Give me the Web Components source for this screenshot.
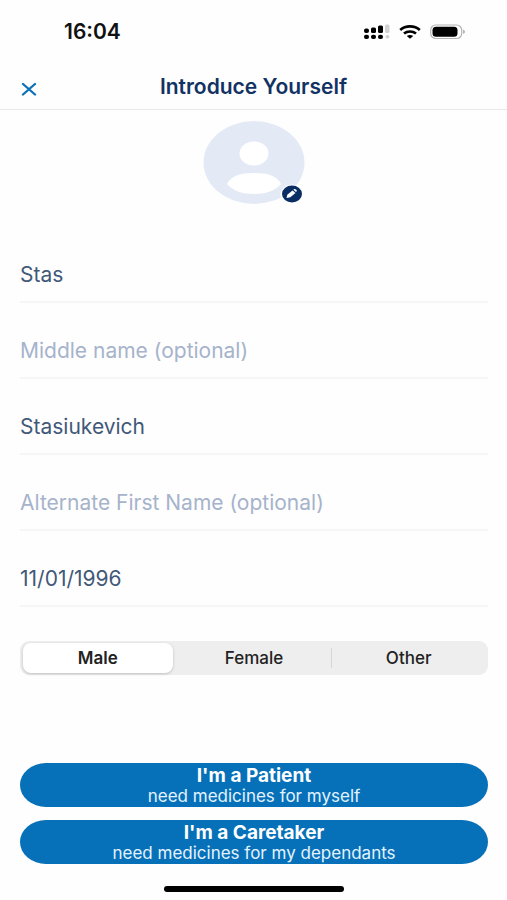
<!DOCTYPE html>
<html lang="en">
<head>
<meta charset="utf-8">
<meta name="viewport" content="width=device-width, initial-scale=1">
<title>Introduce Yourself</title>
<style>
  body { margin: 0; background: #fefefe; font-family: Inter, "Liberation Sans", sans-serif; }
</style>
</head>
<body>
<intro-page></intro-page>
<script>
const define = (name, html, setup) => {
  const template = document.createElement('template');
  template.innerHTML = html;
  customElements.define(name, class extends HTMLElement {
    constructor() {
      super();
      this.attachShadow({ mode: 'open' }).append(template.content.cloneNode(true));
    }
    connectedCallback() { if (setup) setup(this, this.shadowRoot); }
  });
};

define('status-bar', `
<style>
  :host { display: flex; align-items: center; justify-content: space-between; height: 64px; padding: 0 41px 0 64px; box-sizing: border-box; color: #111; }
  time { font-size: 21px; line-height: 24px; font-weight: 600; }
  .icons { display: flex; align-items: center; gap: 9px; }
  svg { display: block; }
</style>
<time>16:04</time>
<div class="icons">
  <svg width="26" height="16" viewBox="0 0 26 16" role="img" aria-label="Signal">
    <g fill="#000">
      <rect x="0" y="4.500" width="5" height="4.500" rx="2"/><rect x="7" y="3.500" width="5" height="5.500" rx="1.500"/><rect x="14" y="1.500" width="5" height="7.500" rx="1.500"/>
      <rect x="0" y="10.700" width="5" height="4.300" rx="2"/><rect x="7" y="10.700" width="5" height="4.300" rx="2"/><rect x="14" y="10.700" width="5" height="4.300" rx="2"/>
    </g>
    <rect x="21" y="0.500" width="4.500" height="8.500" rx="1.500" fill="#d2d2d2"/><rect x="21.500" y="11" width="4" height="3.500" rx="1.700" fill="#d2d2d2"/>
  </svg>
  <svg width="22" height="14" viewBox="0 0 22 14" role="img" aria-label="Wi-Fi">
    <g fill="none" stroke="#000" stroke-width="2.600">
      <path d="M1.200 5C6.500.200 15.500.200 20.800 5"/><path d="M5 8.600c3.400-2.900 8.600-2.900 12 0"/>
    </g>
    <path d="M7.800 11.100c1.800-1.500 4.600-1.500 6.400 0L11 13.800z"/>
  </svg>
  <svg width="36" height="16" viewBox="0 0 36 16" role="img" aria-label="Battery">
    <rect x="0.700" y="1" width="31" height="13.500" rx="5" fill="none" stroke="#b4b4b4" stroke-width="1.200"/>
    <rect x="2.500" y="2.700" width="25" height="10.100" rx="3.500"/>
    <path d="M33.200 5.500c2.200.8 2.200 3.700 0 4.500z" fill="#aaa"/>
  </svg>
</div>`);

define('nav-header', `
<style>
  :host { display: grid; grid-template-columns: 58px 1fr 58px; align-items: center; height: 46px; box-sizing: border-box; border-bottom: 1px solid #e9e9e9; }
  button { justify-self: center; display: grid; place-items: center; width: 32px; height: 32px; padding: 4px 0 0; border: 0; background: none; }
  h1 { margin: 0; text-align: center; font-size: 21px; line-height: 24px; font-weight: 600; color: #123263; white-space: nowrap; }
</style>
<button type="button" aria-label="Close">
  <svg width="16" height="14" viewBox="0 0 16 14"><path d="M2 2l12 10.500M14 2L2 12.500" fill="none" stroke="#0a70b8" stroke-width="2.300" stroke-linecap="round"/></svg>
</button>
<h1><slot></slot></h1>`);

define('profile-avatar', `
<style>
  :host { display: grid; justify-content: center; padding: 11px 0 16px; }
  div { position: relative; }
  svg { display: block; }
  button { position: absolute; right: 1px; bottom: 0; width: 23px; height: 19px; padding: 0; border: 0; background: none; }
</style>
<div>
  <svg width="102" height="83" viewBox="0 0 102 83" role="img" aria-label="Profile picture">
    <ellipse cx="51" cy="41.500" rx="50.500" ry="41.500" fill="#e4eaf5"/>
    <ellipse cx="51" cy="32.500" rx="14.500" ry="12" fill="#fff"/>
    <path d="M24 63C28 55 37 52 51 52S74 55 78 63C72 70 62 73 51 73S30 70 24 63z" fill="#fff"/>
    <ellipse cx="89" cy="73.500" rx="11.500" ry="10" fill="#fefefe"/>
  </svg>
  <button type="button" aria-label="Edit picture">
    <svg width="23" height="19" viewBox="0 0 23 19" overflow="visible">
      <ellipse cx="11" cy="9" rx="10" ry="8.400" fill="#0a2e63"/>
      <path d="M5.500 13l.8-3.200 5.200-4.300 3 2.500-5.200 4.200z" fill="#fff"/>
      <path d="M12.400 4.800l.9-.7c.8-.5 3.100 1.400 2.400 2.100l-.7.900z" fill="#fff"/>
    </svg>
  </button>
</div>`);

define('text-field', `
<style>
  :host { display: block; padding-top: 32px; }
  input { display: block; width: 100%; height: 44px; box-sizing: border-box; margin: 0; padding: 0 0 12px; border: 0; border-bottom: 2px solid #f5f6f7; border-radius: 0; outline: 0; background: none; font: 400 21px/24px Inter, "Liberation Sans", sans-serif; color: #425878; }
  input::placeholder { color: #a6b3cb; opacity: 1; }
</style>
<input type="text">`, (host, root) => {
  const input = root.querySelector('input');
  input.setAttribute('aria-label', host.getAttribute('label'));
  input.placeholder = host.getAttribute('placeholder') || '';
  input.value = host.getAttribute('value') || '';
});

define('gender-picker', `
<style>
  :host { display: block; }
  fieldset { display: grid; grid-template-columns: 1fr 1fr 1fr; min-width: 0; height: 34px; box-sizing: border-box; margin: 0; padding: 2px; border: 0; border-radius: 9px; background: #eee; }
  label { position: relative; display: grid; place-items: center; border-radius: 8px; font-size: 17px; line-height: 20px; font-weight: 500; color: #222; }
  input { position: absolute; inset: 0; width: 100%; height: 100%; margin: 0; appearance: none; }
  label:has(:checked) { margin: 0 4px 0 1px; background: #fff; font-weight: 600; box-shadow: 0 1px 3px #0003; }
  label:last-child::before { content: ""; position: absolute; left: 0; top: 5px; bottom: 5px; width: 1px; background: #d6d6d6; }
</style>
<fieldset aria-label="Gender">
  <label><input type="radio" name="gender" checked><span>Male</span></label>
  <label><input type="radio" name="gender"><span>Female</span></label>
  <label><input type="radio" name="gender"><span>Other</span></label>
</fieldset>`);

define('role-button', `
<style>
  :host { display: block; }
  button { display: block; width: 100%; min-height: 44px; margin: 0; padding: 3px 16px 1px; border: 0; border-radius: 26px / 22px; background: #0671b8; color: #e4f3ff; font: 400 17px/20px Inter, "Liberation Sans", sans-serif; }
  strong { display: block; font-size: 19px; line-height: 20px; font-weight: 700; color: #fff; }
</style>
<button type="button"><strong><slot name="title"></slot></strong><slot></slot></button>`);

define('intro-page', `
<style>
  :host { display: flex; flex-direction: column; min-height: 100vh; }
  form { flex: 1; display: flex; flex-direction: column; padding: 0 19px 0 20px; }
  .fields { padding: 7px 0 34px; }
  .actions { display: grid; gap: 13px; margin-top: auto; }
  .home { width: 180px; height: 6px; margin: 22px auto 8px; border-radius: 3px; background: #000; }
</style>
<status-bar></status-bar>
<nav-header>Introduce Yourself</nav-header>
<profile-avatar></profile-avatar>
<form>
  <div class="fields">
    <text-field label="First name" value="Stas"></text-field>
    <text-field label="Middle name" placeholder="Middle name (optional)"></text-field>
    <text-field label="Last name" value="Stasiukevich"></text-field>
    <text-field label="Alternate first name" placeholder="Alternate First Name (optional)"></text-field>
    <text-field label="Date of birth" value="11/01/1996"></text-field>
  </div>
  <gender-picker></gender-picker>
  <div class="actions">
    <role-button><span slot="title">I'm a Patient</span>need medicines for myself</role-button>
    <role-button><span slot="title">I'm a Caretaker</span>need medicines for my dependants</role-button>
  </div>
</form>
<div class="home"></div>`);
</script>
</body>
</html>
